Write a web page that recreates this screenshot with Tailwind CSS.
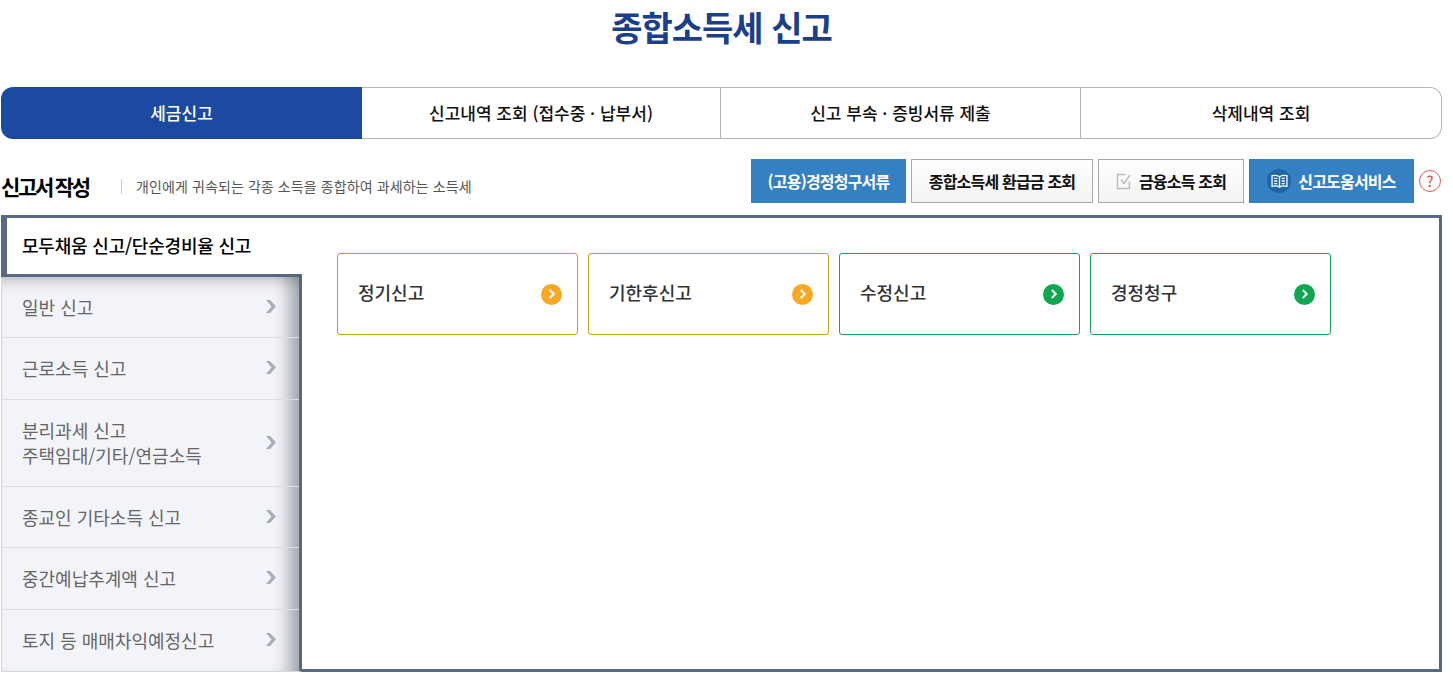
<!DOCTYPE html>
<html lang="ko">
<head>
<meta charset="utf-8">
<script src="https://cdn.jsdelivr.net/npm/@tailwindcss/browser@4"></script>
</head>
<body class="bg-white overflow-hidden font-['Noto_Sans_CJK_KR','Noto_Sans',sans-serif]">
<div class="w-[1441px] ml-px h-[673px]">
  <h1 class="h-[87px] pt-[3px] text-center text-[34px] leading-[48px] font-bold text-[#1b3f8b] tracking-[-1px]">종합소득세 신고</h1>

  <div class="flex h-[52px] text-[17px] font-medium text-[#111]">
    <div class="w-[361px] flex items-center justify-center bg-[#1c4aa0] text-white rounded-l-[12px]">세금신고</div>
    <div class="w-[359px] flex items-center justify-center border-y border-r border-[#b5b5b5]">신고내역 조회 (접수중 · 납부서)</div>
    <div class="w-[360px] flex items-center justify-center border-y border-r border-[#b5b5b5]">신고 부속 · 증빙서류 제출</div>
    <div class="flex-1 flex items-center justify-center border-y border-r border-[#b5b5b5] rounded-r-[12px]">삭제내역 조회</div>
  </div>

  <div class="flex items-start h-[76px] pt-[20px]">
    <div class="flex items-center h-[44px] pt-[10px]">
      <h2 class="w-[87px] text-[21px] font-bold text-black tracking-[-2.3px] [word-spacing:-1px] leading-[28px] whitespace-nowrap">신고서 작성</h2>
      <span class="ml-[33px] h-[15px] w-px bg-[#c8c8c8]"></span>
      <span class="ml-[14px] text-[14px] text-[#555] tracking-[0.1px]">개인에게 귀속되는 각종 소득을 종합하여 과세하는 소득세</span>
    </div>
    <div class="ml-auto mr-px flex items-center gap-[5px] text-[16px] font-bold tracking-[-0.8px]">
      <div class="w-[155px] h-[44px] flex items-center justify-center bg-[#3480c2] text-white">(고용)경정청구서류</div>
      <div class="w-[182px] h-[44px] flex items-center justify-center bg-gradient-to-b from-white to-[#f3f3f3] border border-[#a8a8a8] text-[#111]">종합소득세 환급금 조회</div>
      <div class="w-[146px] h-[44px] flex items-center justify-center gap-[6px] bg-gradient-to-b from-white to-[#f3f3f3] border border-[#a8a8a8] text-[#111]">
        <svg width="17" height="17" viewBox="0 0 17 17" fill="none"><path d="M13.500 8.500V15.500H1.500V1.500H9.500" stroke="#b9bcc4" stroke-width="1.4"/><path d="M5 6.500L8 10.500L14 2" stroke="#b9bcc4" stroke-width="1.4"/></svg>
        금융소득 조회
      </div>
      <div class="w-[165px] h-[44px] flex items-center justify-center gap-[7px] bg-[#3480c2] text-white">
        <span class="w-[24px] h-[24px] rounded-full bg-[#1e66a8] flex items-center justify-center">
          <svg width="17" height="14" viewBox="0 0 16 13" fill="none" stroke="white" stroke-width="1.2"><path d="M8 2.500C6.500 1.200 3.500 1 1 1.500V11.500C3.500 11 6.500 11.200 8 12.300C9.500 11.200 12.500 11 15 11.500V1.500C12.500 1 9.500 1.200 8 2.500V12.300"/><path d="M3 4H6M3 6.500H6M3 9H6M10 4H13M10 6.500H13M10 9H13"/></svg>
        </span>
        신고도움서비스
      </div>
      <div class="w-[22px] h-[22px] rounded-full border-[1.5px] border-[#e4575c] bg-white text-[#e4575c] text-[15px] font-medium flex items-center justify-center tracking-normal">?</div>
    </div>
  </div>

  <div class="flex h-[457px]">
    <div class="w-[301px] shrink-0 flex flex-col">
      <div class="h-[62px] shrink-0 flex items-center border-t-[3px] border-b-[3px] border-l-[6px] border-[#5a6781] pl-[15px] text-[18px] font-medium text-black tracking-[-0.2px] bg-white pb-[2px]">모두채움 신고/단순경비율 신고</div>
      <div class="flex-1 flex flex-col border-r-[3px] border-l border-b border-r-[#5a6781] border-l-[#d5d8de] border-b-[#d5d8de] bg-[#f2f4fa] text-[18px] text-[#666] shadow-[inset_-20px_0_16px_-10px_rgba(0,0,0,0.32),inset_0_14px_14px_-10px_rgba(0,0,0,0.22)]">
        <div class="h-[61px] shrink-0 flex items-center justify-between pl-[20px] pr-[23px] border-b border-[#dcdee3]">일반 신고<svg class="-mt-[2px]" width="10" height="13" viewBox="0 0 10 13"><path d="M0 0H4L10 6.500L4 13H0L5.500 6.500Z" fill="#a9adb8"/></svg></div>
        <div class="h-[62px] shrink-0 flex items-center justify-between pl-[20px] pr-[23px] border-b border-[#dcdee3]">근로소득 신고<svg class="-mt-[2px]" width="10" height="13" viewBox="0 0 10 13"><path d="M0 0H4L10 6.500L4 13H0L5.500 6.500Z" fill="#a9adb8"/></svg></div>
        <div class="h-[87px] shrink-0 flex items-center justify-between pl-[20px] pr-[23px] border-b border-[#dcdee3] leading-[25px]"><span>분리과세 신고<br>주택임대/기타/연금소득</span><svg class="-mt-[2px]" width="10" height="13" viewBox="0 0 10 13"><path d="M0 0H4L10 6.500L4 13H0L5.500 6.500Z" fill="#a9adb8"/></svg></div>
        <div class="h-[61px] shrink-0 flex items-center justify-between pl-[20px] pr-[23px] border-b border-[#dcdee3]">종교인 기타소득 신고<svg class="-mt-[2px]" width="10" height="13" viewBox="0 0 10 13"><path d="M0 0H4L10 6.500L4 13H0L5.500 6.500Z" fill="#a9adb8"/></svg></div>
        <div class="h-[62px] shrink-0 flex items-center justify-between pl-[20px] pr-[23px] border-b border-[#dcdee3]">중간예납추계액 신고<svg class="-mt-[2px]" width="10" height="13" viewBox="0 0 10 13"><path d="M0 0H4L10 6.500L4 13H0L5.500 6.500Z" fill="#a9adb8"/></svg></div>
        <div class="flex-1 flex items-center justify-between pl-[20px] pr-[23px]">토지 등 매매차익예정신고<svg class="-mt-[2px]" width="10" height="13" viewBox="0 0 10 13"><path d="M0 0H4L10 6.500L4 13H0L5.500 6.500Z" fill="#a9adb8"/></svg></div>
      </div>
    </div>
    <div class="flex-1 flex items-start gap-[10px] border-t-[3px] border-r-[3px] border-b-[3px] border-[#5a6781] pl-[35px] pt-[35px] text-[18px] font-medium text-[#333]">
      <div class="w-[241px] h-[82px] flex items-center justify-between pl-[20px] pr-[15px] border border-[#d09a1c] rounded-[3px]"><span class="-mt-[3px]">정기신고</span><span class="w-[21px] h-[21px] rounded-full bg-[#f9a826] flex items-center justify-center"><svg width="8" height="10" viewBox="0 0 8 10"><path d="M1.800 1L5.800 5L1.800 9" fill="none" stroke="white" stroke-width="2"/></svg></span></div>
      <div class="w-[241px] h-[82px] flex items-center justify-between pl-[20px] pr-[15px] border border-[#d09a1c] rounded-[3px]"><span class="-mt-[3px]">기한후신고</span><span class="w-[21px] h-[21px] rounded-full bg-[#f9a826] flex items-center justify-center"><svg width="8" height="10" viewBox="0 0 8 10"><path d="M1.800 1L5.800 5L1.800 9" fill="none" stroke="white" stroke-width="2"/></svg></span></div>
      <div class="w-[241px] h-[82px] flex items-center justify-between pl-[20px] pr-[15px] border border-[#10a85c] rounded-[3px]"><span class="-mt-[3px]">수정신고</span><span class="w-[21px] h-[21px] rounded-full bg-[#0ea64f] flex items-center justify-center"><svg width="8" height="10" viewBox="0 0 8 10"><path d="M1.800 1L5.800 5L1.800 9" fill="none" stroke="white" stroke-width="2"/></svg></span></div>
      <div class="w-[241px] h-[82px] flex items-center justify-between pl-[20px] pr-[15px] border border-[#10a85c] rounded-[3px]"><span class="-mt-[3px]">경정청구</span><span class="w-[21px] h-[21px] rounded-full bg-[#0ea64f] flex items-center justify-center"><svg width="8" height="10" viewBox="0 0 8 10"><path d="M1.800 1L5.800 5L1.800 9" fill="none" stroke="white" stroke-width="2"/></svg></span></div>
    </div>
  </div>
</div>
</body>
</html>
